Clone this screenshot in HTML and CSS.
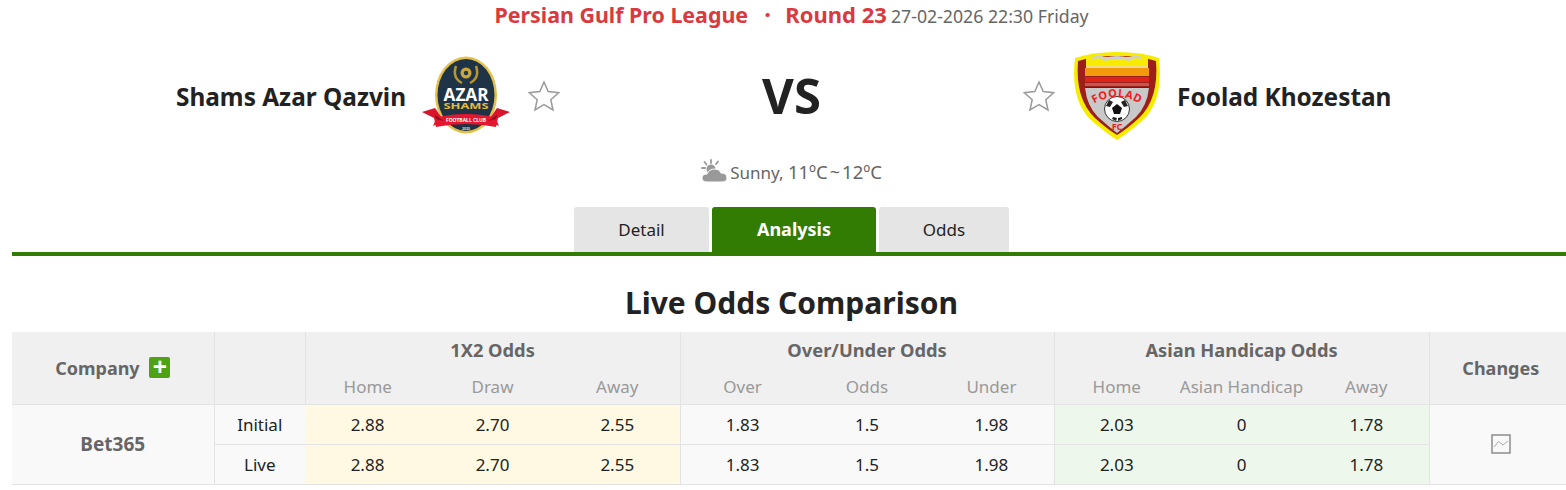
FILE: index.html
```html
<!DOCTYPE html>
<html lang="en">
<head>
  <meta charset="UTF-8" />
  <meta name="viewport" content="width=device-width, initial-scale=1.0"/>
  <title>Shams Azar Qazvin vs Foolad Khozestan</title>
  <link rel="stylesheet" href="styles.css">
</head>
<body>
  <div class="container">
    <div class="league">
      <span class="league-name">Persian Gulf Pro League</span>
      <span class="league-dot">·</span>
      <span class="league-name league-round">Round 23</span>
      <span class="match-time">27-02-2026 22:30 Friday</span>
    </div>

    <div class="teams">
      <div class="team team-home">
        <span class="team-name">Shams Azar Qazvin</span>
        <svg class="logo-home" width="88" height="80" viewBox="0 0 88 80">
          <ellipse cx="44" cy="39" rx="31" ry="38.500" fill="#e3c04a"/>
          <ellipse cx="44" cy="39" rx="28.500" ry="36" fill="#1f3347"/>
          <circle cx="44" cy="17" r="5.500" fill="#c9a63c"/>
          <circle cx="44" cy="17" r="2.200" fill="#1f3347"/>
          <path d="M34 10 Q30 22 40 27 M54 10 Q58 22 48 27" stroke="#b8962f" stroke-width="2.500" fill="none"/>
          <text x="44" y="45" class="logo-azar" textLength="45" lengthAdjust="spacingAndGlyphs">AZAR</text>
          <text x="44" y="53" class="logo-shams" textLength="45" lengthAdjust="spacingAndGlyphs">SHAMS</text>
          <path d="M0 56 L13 52 L22 65 L11 70 L14 63 Z" fill="#d9142b"/>
          <path d="M88 56 L75 52 L66 65 L77 70 L74 63 Z" fill="#d9142b"/>
          <path d="M12 62 Q44 54 76 62 L74 71 Q44 65 14 71 Z" fill="#e5162e"/>
          <path d="M13 59 L22 65 L14 63 Z M75 59 L66 65 L74 63 Z" fill="#8e0d1c"/>
          <text x="44" y="65.500" class="logo-club">FOOTBALL CLUB</text>
          <text x="44" y="73.500" class="logo-year">2020</text>
        </svg>
        <svg class="star" width="32" height="32" viewBox="0 0 32 32">
          <path d="M16 2 L20.200 11.600 L30.600 12.700 L22.800 19.700 L25 30 L16 24.700 L7 30 L9.200 19.700 L1.400 12.700 L11.800 11.600 Z"/>
        </svg>
      </div>

      <div class="vs">VS</div>

      <div class="team team-away">
        <svg class="star" width="32" height="32" viewBox="0 0 32 32">
          <path d="M16 2 L20.200 11.600 L30.600 12.700 L22.800 19.700 L25 30 L16 24.700 L7 30 L9.200 19.700 L1.400 12.700 L11.800 11.600 Z"/>
        </svg>
        <svg class="logo-away" width="90" height="90" viewBox="0 0 90 90">
          <path d="M45 1 Q70 1 87 7 Q92 50 70 70 Q56 82 45 89 Q34 82 20 70 Q-2 50 3 7 Q20 1 45 1 Z" fill="#f7ec00"/>
          <path d="M45 5 Q68 5 84 10 Q87 48 67 67 Q55 78 45 84 Q35 78 23 67 Q3 48 6 10 Q22 5 45 5 Z" fill="#9c1f1a"/>
          <path d="M13 37 H77 Q75 55 64 66 Q54 75 45 82 Q36 75 26 66 Q15 55 13 37 Z" fill="#c9c9c9"/>
          <rect x="14" y="6" width="62" height="9" fill="#f7ec00"/>
          <rect x="14" y="15" width="62" height="2" fill="#f3d98a"/>
          <rect x="13" y="17" width="64" height="8" fill="#f39a0c"/>
          <rect x="13" y="26" width="64" height="5" fill="#dd2418"/>
          <rect x="13" y="32" width="64" height="3" fill="#c9554d"/>
          <rect x="13" y="36" width="64" height="1" fill="#333"/>
          <path d="M20 6 Q30 3 33 7 Q45 3 57 7 Q60 3 70 6 L70 8 Q60 6 57 10 Q45 6 33 10 Q30 6 20 8 Z" fill="#cfcfcf"/>
          <circle cx="45" cy="58" r="12.500" fill="#fff" stroke="#333" stroke-width="1"/>
          <path d="M45 53 L50 57 L48 63 L42 63 L40 57 Z" fill="#111"/>
          <path d="M37 49 L41 51 L38 56 L34 55 Z M53 49 L49 51 L52 56 L56 55 Z M40 68 L44 70 L45 67 L41 66 Z M50 68 L46 70 L46 67 L50 66 Z" fill="#222"/>
          <path id="foolad-arc" d="M17 56 Q45 36 73 56" fill="none"/>
          <text class="logo-foolad"><textPath href="#foolad-arc" startOffset="50%">FOOLAD</textPath></text>
          <text x="45" y="79" class="logo-fc">FC</text>
        </svg>
        <span class="team-name">Foolad Khozestan</span>
      </div>
    </div>

    <div class="weather">
      <svg width="26" height="24" viewBox="0 0 26 24">
        <path d="M10 1 V4 M3.500 3 L5.500 5.500 M1 9 H4 M17 2.500 L15 5" stroke="#999" stroke-width="1.800" stroke-linecap="round"/>
        <circle cx="10" cy="10" r="4.500" fill="#999"/>
        <path d="M6 23 Q1 23 1 19 Q1 15 6 15 Q8 10 14 10 Q19 10 20 14 Q26 14 26 19 Q26 23 21 23 Z" fill="#999" stroke="#fff" stroke-width="1"/>
      </svg>
      <span>Sunny, <span class="temp">11ºC</span><span class="tilde">~</span><span class="temp">12ºC</span></span>
    </div>

    <div class="tabs">
      <a class="tab">Detail</a>
      <a class="tab active">Analysis</a>
      <a class="tab tab-odds">Odds</a>
    </div>

    <h2 class="section-title">Live Odds Comparison</h2>

    <table class="odds">
      <colgroup>
        <col class="col-company">
        <col class="col-type">
        <col span="3" class="col-odd">
        <col span="3" class="col-ou">
        <col span="3" class="col-odd">
        <col class="col-changes">
      </colgroup>
      <thead>
        <tr class="group-row">
          <th rowspan="2" class="company-head">Company <span class="plus">+</span></th>
          <th rowspan="2"></th>
          <th colspan="3">1X2 Odds</th>
          <th colspan="3">Over/Under Odds</th>
          <th colspan="3">Asian Handicap Odds</th>
          <th rowspan="2" class="changes-head">Changes</th>
        </tr>
        <tr class="sub-row">
          <th class="group-start">Home</th><th>Draw</th><th>Away</th>
          <th class="group-start">Over</th><th>Odds</th><th>Under</th>
          <th class="group-start">Home</th><th>Asian Handicap</th><th>Away</th>
        </tr>
      </thead>
      <tbody>
        <tr>
          <td rowspan="2" class="company">Bet365</td>
          <td class="type">Initial</td>
          <td class="y">2.88</td><td class="y">2.70</td><td class="y edge">2.55</td>
          <td>1.83</td><td>1.5</td><td class="edge">1.98</td>
          <td class="g">2.03</td><td class="g">0</td><td class="g">1.78</td>
          <td rowspan="2" class="changes">
            <svg width="20" height="20" viewBox="0 0 20 20">
              <rect x="1" y="1" width="18" height="18" fill="none" stroke="#8c8c8c" stroke-width="1.500"/>
              <path d="M3 13 L7.500 7.500 L12 11 L17 7" fill="none" stroke="#a9a9a9" stroke-width="1"/>
            </svg>
          </td>
        </tr>
        <tr>
          <td class="type">Live</td>
          <td class="y">2.88</td><td class="y">2.70</td><td class="y edge">2.55</td>
          <td>1.83</td><td>1.5</td><td class="edge">1.98</td>
          <td class="g">2.03</td><td class="g">0</td><td class="g">1.78</td>
        </tr>
      </tbody>
    </table>
  </div>
</body>
</html>
```

FILE: styles.css
```css
* {
  box-sizing: border-box;
}
body {
  margin: 0;
  background: #fff;
  color: #222;
  font-family: "Noto Sans", sans-serif;
  overflow: hidden;
}
.container {
  margin-left: 12px;
}
.league {
  height: 32px;
  padding-left: 5px;
  text-align: center;
  line-height: 29px;
  white-space: nowrap;
}
.league-name {
  color: #d93a3f;
  font-size: 21.4px;
  font-weight: 700;
}
.league-round {
  font-size: 22px;
}
.league-dot {
  color: #d93a3f;
  font-size: 24px;
  font-weight: 700;
  line-height: 0;
  margin: 0 10px 0 12px;
}
.match-time {
  color: #666;
  font-size: 17.7px;
}
.teams {
  display: grid;
  grid-template-columns: 1fr 463px 1fr;
  align-items: center;
  height: 128px;
  padding-left: 5px;
}
.team {
  display: flex;
  align-items: center;
}
.team-home {
  justify-content: flex-end;
}
.team-name {
  font-size: 24.4px;
  font-weight: 700;
  white-space: nowrap;
}
.logo-home {
  margin: 0 18px 0 16px;
}
.logo-away {
  margin: 0 15px 0 17px;
}
.star path {
  fill: #fff;
  stroke: #9a9a9a;
  stroke-width: 1.5;
}
.vs {
  margin-bottom: 2px;
  text-align: center;
  font-size: 49px;
  font-weight: 700;
}
.logo-azar {
  fill: #fff;
  font-size: 18px;
  font-weight: 700;
  text-anchor: middle;
}
.logo-shams {
  fill: #e2bd3c;
  font-size: 8.5px;
  font-weight: 700;
  text-anchor: middle;
}
.logo-club {
  fill: #fff;
  font-size: 5px;
  font-weight: 700;
  text-anchor: middle;
}
.logo-year {
  fill: #ddd;
  font-size: 3.5px;
  font-weight: 700;
  text-anchor: middle;
}
.logo-foolad {
  fill: #ef1c24;
  font-size: 11px;
  font-weight: 700;
  letter-spacing: 0.5px;
  text-anchor: middle;
}
.logo-fc {
  fill: #ef1c24;
  font-size: 9px;
  font-weight: 700;
  text-anchor: middle;
}
.weather {
  display: flex;
  justify-content: center;
  align-items: center;
  gap: 3px;
  height: 20px;
  margin-top: 1px;
  padding-left: 5px;
  color: #666;
  font-size: 17px;
}
.temp {
  font-size: 18.5px;
}
.tilde {
  margin: 0 2px;
  font-size: 18px;
}
.tabs {
  display: flex;
  justify-content: center;
  gap: 3px;
  height: 49px;
  margin-top: 26px;
  padding-left: 5px;
  border-bottom: 4px solid #337c03;
}
.tab {
  width: 135px;
  height: 45px;
  line-height: 45px;
  text-align: center;
  background: #e5e5e5;
  border-radius: 3px 3px 0 0;
  font-size: 17px;
}
.tab.active {
  width: 164px;
  background: #337c03;
  color: #fff;
  font-size: 18px;
  font-weight: 700;
}
.tab.tab-odds {
  width: 130px;
}
.section-title {
  margin: 0;
  height: 76px;
  padding-left: 5px;
  line-height: 94px;
  text-align: center;
  font-size: 30px;
  font-weight: 700;
}
.odds {
  width: 1560px;
  table-layout: fixed;
  border-collapse: collapse;
  font-size: 17px;
}
.col-company {
  width: 202px;
}
.col-type {
  width: 91px;
}
.col-odd {
  width: 125px;
}
.col-ou {
  width: 124.67px;
}
.col-changes {
  width: 143px;
}
.odds th, .odds td {
  padding: 0;
  text-align: center;
  font-weight: 400;
  border-bottom: 1px solid #e3e3e3;
}
.odds thead th {
  background: #f0f0f0;
  color: #666;
  border-left: 1px solid #e3e3e3;
}
.odds thead th:first-child {
  border-left: none;
}
.odds .group-row th {
  height: 37px;
  padding-bottom: 2px;
  font-size: 18.3px;
  font-weight: 700;
  border-bottom: none;
}
.odds .group-row th.company-head, .odds .group-row th.changes-head {
  padding-bottom: 0;
  font-size: 18px;
  border-bottom: 1px solid #e3e3e3;
}
.odds .group-row th:nth-child(2) {
  border-bottom: 1px solid #e3e3e3;
}
.odds .sub-row th {
  height: 35px;
  color: #999;
  border-left: none;
}
.odds .sub-row th.group-start {
  border-left: 1px solid #e3e3e3;
}
.plus {
  display: inline-block;
  width: 21px;
  height: 21px;
  margin-left: 5px;
  line-height: 19px;
  vertical-align: -1px;
  border-radius: 2px;
  background: #4fa214;
  color: #fff;
  font-size: 25px;
  font-weight: 700;
}
.odds td {
  height: 40px;
  background: #f9f9f9;
}
.odds td.company {
  color: #666;
  font-weight: 700;
  font-size: 19px;
}
.odds td.type {
  border-left: 1px solid #e3e3e3;
}
.odds td.y {
  background: #fff9e3;
}
.odds td.g {
  background: #edf7ec;
}
.odds td.edge {
  border-right: 1px solid #e3e3e3;
}
.odds td.changes {
  border-left: 1px solid #e3e3e3;
}
.changes svg {
  display: block;
  margin: 0 auto;
}
```
